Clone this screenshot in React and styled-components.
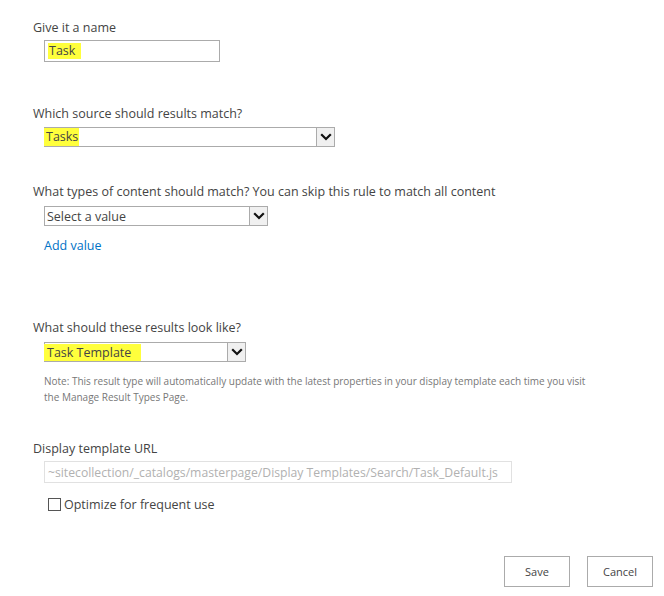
import React from "react";
import styled, { createGlobalStyle } from "styled-components";

const GlobalStyle = createGlobalStyle`
  body {
    margin: 0;
    background: #fff;
    font-family: "Open Sans", "Noto Sans", sans-serif;
    color: #444;
  }
`;

//전체 레이아웃 =====================================
const Page = styled.div`
  width: 664px;
  height: 596px;
  box-sizing: border-box;
  padding: 19px 11px 0 33px;
  display: flex;
  flex-direction: column;
`;

const Label = styled.div`
  font-size: 12.5px;
  line-height: 18px;
  color: #444;
  margin-top: ${(props) => props.$mt || 0}px;
  white-space: nowrap;
`;

const Field = styled.div`
  margin-left: 11px;
  margin-top: ${(props) => props.$mt || 0}px;
`;

//입력창 =====================================
const TextBox = styled.div`
  width: ${(props) => props.$w}px;
  height: 22px;
  box-sizing: border-box;
  border: 1px solid ${(props) => (props.$disabled ? "#e1e1e1" : "#ababab")};
  display: flex;
  align-items: center;
  padding-left: 3px;
  font-size: ${(props) => (props.$disabled ? "12.2px" : "12.5px")};
  color: ${(props) => (props.$disabled ? "#b1b1b1" : "#444")};
  white-space: nowrap;
  overflow: hidden;
`;

const Highlight = styled.span`
  background: #ffff3c;
  color: #444;
  display: inline-block;
  line-height: ${(props) => props.$h || 16}px;
  padding: 0 ${(props) => props.$pr || 0}px 0 ${(props) => props.$pl || 0}px;
  margin-left: ${(props) => props.$ml || 0}px;
`;

//드롭다운 =====================================
const SelectBox = styled.div`
  width: ${(props) => props.$w}px;
  height: 20px;
  box-sizing: border-box;
  border: 1px solid #ababab;
  display: flex;
  align-items: stretch;
  font-size: 12.5px;
  color: #444;
`;

const SelectValue = styled.div`
  flex: 1;
  display: flex;
  align-items: center;
  padding-left: ${(props) => props.$pl || 0}px;
  white-space: nowrap;
`;

const ArrowButton = styled.div`
  width: 17px;
  background: #f0f0f0;
  border-left: 1px solid #ababab;
  display: flex;
  align-items: center;
  justify-content: center;
`;

const Link = styled.a`
  display: block;
  font-size: 12.5px;
  line-height: 18px;
  color: #0072c6;
  text-decoration: none;
  margin-left: 11px;
  margin-top: ${(props) => props.$mt || 0}px;
`;

const Note = styled.div`
  font-size: 10px;
  line-height: 16px;
  color: #777;
  margin-left: 11px;
  margin-top: ${(props) => props.$mt || 0}px;
  width: 545px;
`;

//체크박스 =====================================
const CheckRow = styled.label`
  display: flex;
  align-items: center;
  gap: 3px;
  margin-left: 15px;
  margin-top: ${(props) => props.$mt || 0}px;
  height: 18px;
  font-size: 12.5px;
  color: #444;
`;

const CheckBox = styled.span`
  width: 13px;
  height: 13px;
  box-sizing: border-box;
  border: 1px solid #555;
  background: #fff;
`;

//버튼 =====================================
const ButtonRow = styled.div`
  display: flex;
  justify-content: flex-end;
  gap: 17px;
  margin-top: ${(props) => props.$mt || 0}px;
`;

const Button = styled.button`
  width: 66px;
  height: 31px;
  box-sizing: border-box;
  border: 1px solid #ababab;
  background: #fff;
  font-family: "Open Sans", "Noto Sans", sans-serif;
  font-size: 11px;
  color: #444;
  padding: 0;
`;

function Chevron() {
  return (
    <svg width="12" height="8" viewBox="0 0 12 8">
      <path d="M1.2 1.2 L6 6 L10.8 1.2" fill="none" stroke="#111" strokeWidth="2.2" />
    </svg>
  );
}

function Select({ width, children, pl }) {
  return (
    <SelectBox $w={width}>
      <SelectValue $pl={pl}>{children}</SelectValue>
      <ArrowButton>
        <Chevron />
      </ArrowButton>
    </SelectBox>
  );
}

export default function App() {
  return (
    <>
      <GlobalStyle />
      <Page>
        <Label>Give it a name</Label>
        <Field $mt={3}>
          <TextBox $w={176}>
            <Highlight $pl={1} $pr={6}>Task</Highlight>
          </TextBox>
        </Field>

        <Label $mt={43}>Which source should results match?</Label>
        <Field $mt={4}>
          <Select width={291}>
            <Highlight $h={18} $pl={2} $pr={1} $ml={-1}>Tasks</Highlight>
          </Select>
        </Field>

        <Label $mt={36}>
          What types of content should match? You can skip this rule to match all content
        </Label>
        <Field $mt={5}>
          <Select width={224} pl={2}>Select a value</Select>
        </Field>
        <Link href="#" $mt={11}>Add value</Link>

        <Label $mt={64}>What should these results look like?</Label>
        <Field $mt={5}>
          <Select width={202}>
            <Highlight $h={17} $pl={3} $pr={10} $ml={-1}>Task Template</Highlight>
          </Select>
        </Field>
        <Note $mt={11}>
          Note: This result type will automatically update with the latest properties in your display template each time you visit the Manage Result Types Page.
        </Note>

        <Label $mt={35}>Display template URL</Label>
        <Field $mt={3}>
          <TextBox $w={468} $disabled>
            ~sitecollection/_catalogs/masterpage/Display Templates/Search/Task_Default.js
          </TextBox>
        </Field>
        <CheckRow $mt={12}>
          <CheckBox />
          Optimize for frequent use
        </CheckRow>

        <ButtonRow $mt={43}>
          <Button>Save</Button>
          <Button>Cancel</Button>
        </ButtonRow>
      </Page>
    </>
  );
}
